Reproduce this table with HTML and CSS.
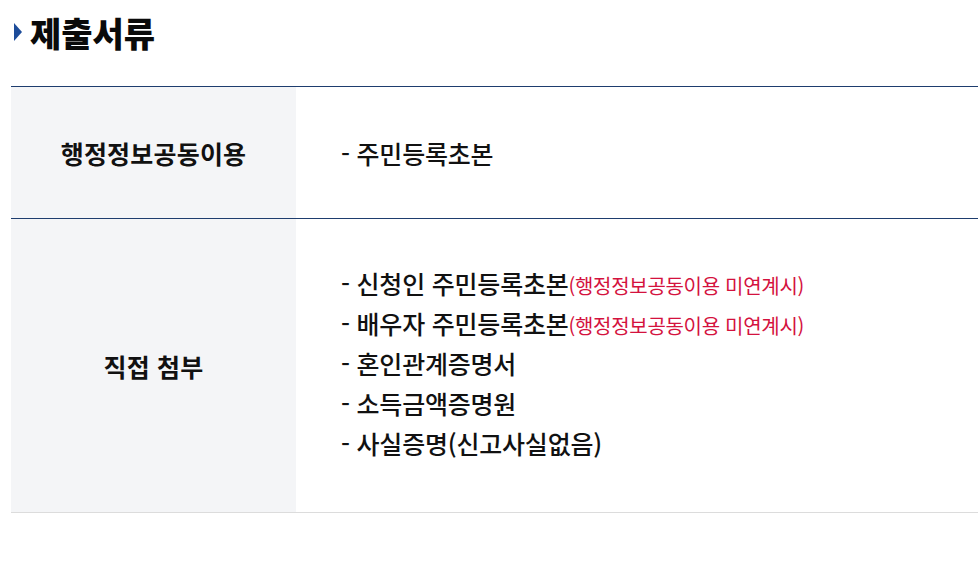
FILE: index.html
```html
<!DOCTYPE html>
<html lang="ko">
<head>
<meta charset="utf-8">
<link rel="stylesheet" href="styles.css">
</head>
<body>
<div class="page">
  <h2 class="title"><span class="marker"></span>제출서류</h2>
  <div class="table">
    <div class="row top">
      <div class="th">행정정보공동이용</div>
      <div class="td">
        <p>- 주민등록초본</p>
      </div>
    </div>
    <div class="row">
      <div class="th">직접 첨부</div>
      <div class="td list">
        <p>- 신청인 주민등록초본<span class="red">(행정정보공동이용 미연계시)</span></p>
        <p>- 배우자 주민등록초본<span class="red">(행정정보공동이용 미연계시)</span></p>
        <p>- 혼인관계증명서</p>
        <p>- 소득금액증명원</p>
        <p>- 사실증명(신고사실없음)</p>
      </div>
    </div>
  </div>
</div>
</body>
</html>
```

FILE: styles.css
```css
html, body {
  margin: 0;
  padding: 0;
  background: #fff;
}
body {
  font-family: "Noto Sans CJK KR", "Noto Sans", sans-serif;
  color: #111;
}
.page {
  padding: 0 0 0 11px;
}
.title {
  display: flex;
  align-items: center;
  margin: 0;
  padding-top: 10px;
  height: 44px;
  font-size: 34px;
  font-weight: 900;
  letter-spacing: 0;
  color: #0a0a0a;
}
.marker {
  width: 0;
  height: 0;
  border-top: 9px solid transparent;
  border-bottom: 9px solid transparent;
  border-left: 8px solid #1d4c9a;
  margin: 0 8px 0 3px;
}
.table {
  margin-top: 32px;
  border-top: 1px solid #1e3d6e;
  border-bottom: 1px solid #dcdcdc;
}
.row {
  display: flex;
}
.row.top {
  height: 131px;
  border-bottom: 1px solid #1e3d6e;
}
.th {
  width: 285px;
  flex: none;
  background: #f4f5f7;
  display: flex;
  align-items: center;
  justify-content: center;
  font-size: 25px;
  font-weight: 700;
  letter-spacing: 0.2px;
}
.td {
  flex: 1;
  display: flex;
  flex-direction: column;
  justify-content: center;
  padding-left: 45px;
  font-size: 25px;
  font-weight: 500;
  letter-spacing: -0.2px;
}
.td p {
  margin: 0;
  line-height: 40px;
  height: 40px;
}
.list {
  padding: 44px 0 49px 45px;
}
.red {
  color: #d4123e;
  font-size: 20px;
  font-weight: 400;
  letter-spacing: -0.3px;
}
```
